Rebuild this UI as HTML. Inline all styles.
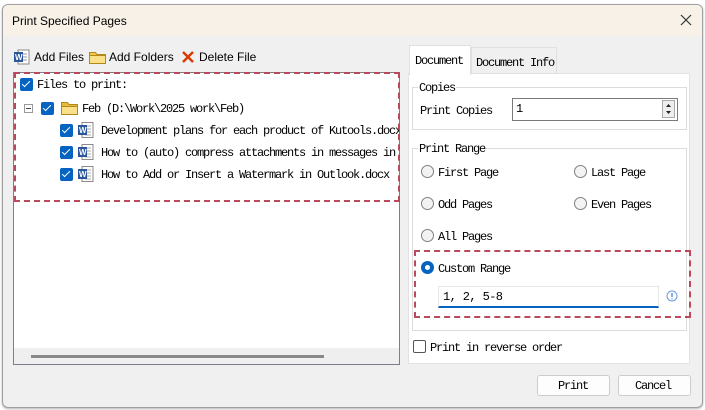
<!DOCTYPE html>
<html><head><meta charset="utf-8"><style>
*{box-sizing:border-box;margin:0;padding:0}
body{width:705px;height:410px;background:#fff;position:relative;overflow:hidden;font-family:"Liberation Sans",sans-serif;font-size:12px;color:#000}
.win{position:absolute;left:2px;top:4px;width:701px;height:404px;border:1px solid #a0a0a0;border-radius:6px;background:#f0f0f0;overflow:hidden;box-shadow:0 1px 2px rgba(0,0,0,.3)}
.title{position:absolute;left:0;top:0;width:100%;height:31px;background:#f8f1e8}
.a{position:absolute;white-space:nowrap}
.m{font-family:"Liberation Mono","Noto Sans CJK SC",monospace;font-size:12px;letter-spacing:-1.2px;line-height:14px;margin-top:1px}
.cb{position:absolute;width:13px;height:13px;background:#0563c1;border-radius:2px}
.cb:after{content:"";position:absolute;left:4px;top:1px;width:3px;height:7px;border:solid #fff;border-width:0 1.5px 1.5px 0;transform:rotate(45deg)}
.rad{position:absolute;width:13px;height:13px;border:1px solid #808080;border-radius:50%;background:#f3f3f3}
.dash{position:absolute;border:2px dashed #b84a5c}
</style></head><body>
<div class="win">
<div class="title"></div>
<div class="a" style="left:9px;top:9px;font-size:12px">Print Specified Pages</div>
<svg class="a" style="left:677px;top:9px" width="12" height="12"><path d="M1 1L11 11M11 1L1 11" stroke="#333" stroke-width="1.2"/></svg>
</div>
<svg class="a" style="left:14px;top:49px" width="16" height="16"><rect x="4" y="1" width="11" height="14" fill="#fff" stroke="#8a8a8a"/><path d="M7 5h6M7 8h6M7 11h6" stroke="#999"/><rect x="0" y="3" width="9" height="10" fill="#2b579a"/><text x="1" y="11" font-size="8" fill="#fff" font-family="Liberation Sans" font-weight="bold">W</text></svg>
<div class="a" style="left:34px;top:50px">Add Files</div>
<svg class="a" style="left:89px;top:50px" width="17" height="14"><path d="M0.5 2.5h6l1.5 2h8.5v9h-16z" fill="#f2c94c" stroke="#b38a1a"/><path d="M0.5 5.5h16v8h-16z" fill="#fbe08a" stroke="#b38a1a"/></svg>
<div class="a" style="left:109px;top:50px">Add Folders</div>
<svg class="a" style="left:181px;top:50px" width="14" height="14"><path d="M2 2L12 12M12 2L2 12" stroke="#d83b01" stroke-width="2.4"/></svg>
<div class="a" style="left:199px;top:50px">Delete File</div>
<div class="a" style="left:13px;top:72px;width:387px;height:293px;background:#fff;border:1px solid #7a7f8a"></div>
<div class="a" style="left:14px;top:348px;width:385px;height:16px;background:#efefef"></div>
<div class="a" style="left:31px;top:355px;width:293px;height:3px;background:#888"></div>
<div class="dash" style="left:14px;top:72px;width:386px;height:130px"></div>
<div class="cb" style="left:20px;top:78px"></div>
<div class="a m" style="left:37px;top:77px">Files to print:</div>
<div class="a" style="left:24px;top:104px;width:9px;height:9px;border:1px solid #999;background:#fff"></div>
<div class="a" style="left:26px;top:108px;width:5px;height:1px;background:#444"></div>
<div class="cb" style="left:41px;top:102px"></div>
<svg class="a" style="left:61px;top:101px" width="17" height="14"><path d="M0.5 1.5h6l1.5 2h8.5v10h-16z" fill="#e8b93a" stroke="#b38a1a"/><path d="M0.5 5.5h16v8h-16z" fill="#fbe08a" stroke="#b38a1a"/></svg>
<div class="a m" style="left:82px;top:101px">Feb (D:\Work\2025 work\Feb)</div>
<div class="a" style="left:14px;top:118px;width:385px;height:70px;overflow:hidden">
<div class="cb" style="left:46px;top:6px"></div><div class="cb" style="left:46px;top:28px"></div><div class="cb" style="left:46px;top:50px"></div>
<svg class="a" style="left:64px;top:4px" width="16" height="16"><rect x="4" y="0.5" width="11" height="15" fill="#fff" stroke="#8a8a8a"/><path d="M7 4h6M7 7h6M7 10h6M7 13h6" stroke="#aaa"/><rect x="0" y="3" width="9" height="10" fill="#2b579a"/><text x="1" y="11" font-size="8" fill="#fff" font-family="Liberation Sans" font-weight="bold">W</text></svg>
<svg class="a" style="left:64px;top:26px" width="16" height="16"><rect x="4" y="0.5" width="11" height="15" fill="#fff" stroke="#8a8a8a"/><path d="M7 4h6M7 7h6M7 10h6M7 13h6" stroke="#aaa"/><rect x="0" y="3" width="9" height="10" fill="#2b579a"/><text x="1" y="11" font-size="8" fill="#fff" font-family="Liberation Sans" font-weight="bold">W</text></svg>
<svg class="a" style="left:64px;top:48px" width="16" height="16"><rect x="4" y="0.5" width="11" height="15" fill="#fff" stroke="#8a8a8a"/><path d="M7 4h6M7 7h6M7 10h6M7 13h6" stroke="#aaa"/><rect x="0" y="3" width="9" height="10" fill="#2b579a"/><text x="1" y="11" font-size="8" fill="#fff" font-family="Liberation Sans" font-weight="bold">W</text></svg>
<div class="a m" style="left:87px;top:5px">Development plans for each product of Kutools.docx</div>
<div class="a m" style="left:87px;top:27px">How to (auto) compress attachments in messages in Outlook.docx</div>
<div class="a m" style="left:87px;top:49px">How to Add or Insert a Watermark in Outlook.docx</div>
</div>
<div class="a" style="left:408px;top:73px;width:282px;height:291px;background:#fff;border:1px solid #e3e3e3"></div>
<div class="a" style="left:471px;top:47px;width:86px;height:27px;background:#f0f0f0;border:1px solid #e0e0e0"></div>
<div class="a" style="left:409px;top:45px;width:62px;height:30px;background:#fff;border:1px solid #e0e0e0;border-bottom:none"></div>
<div class="a m" style="left:415px;top:53px">Document</div>
<div class="a m" style="left:476px;top:55px">Document Info</div>
<div class="a" style="left:412px;top:87px;width:275px;height:43px;border:1px solid #dcdcdc"></div>
<div class="a m" style="left:418px;top:80px;background:#fff;padding:0 1px">Copies</div>
<div class="a m" style="left:420px;top:103px">Print Copies</div>
<div class="a" style="left:512px;top:98px;width:166px;height:23px;border:1px solid #7a7a7a;background:#fff"></div>
<div class="a m" style="left:516px;top:101px">1</div>
<div class="a" style="left:662px;top:100px;width:13px;height:18px;border:1px solid #aaa;background:#eee"></div>
<svg class="a" style="left:663px;top:101px" width="11" height="16"><path d="M3 6L5.5 3L8 6z M3 10L5.5 13L8 10z" fill="#222"/></svg>
<div class="a" style="left:412px;top:148px;width:275px;height:183px;border:1px solid #dcdcdc"></div>
<div class="a m" style="left:418px;top:141px;background:#fff;padding:0 1px">Print Range</div>
<div class="rad" style="left:421px;top:165px"></div><div class="a m" style="left:438px;top:165px">First Page</div>
<div class="rad" style="left:574px;top:165px"></div><div class="a m" style="left:591px;top:165px">Last Page</div>
<div class="rad" style="left:421px;top:197px"></div><div class="a m" style="left:438px;top:197px">Odd Pages</div>
<div class="rad" style="left:574px;top:197px"></div><div class="a m" style="left:591px;top:197px">Even Pages</div>
<div class="rad" style="left:421px;top:229px"></div><div class="a m" style="left:438px;top:229px">All Pages</div>
<div class="a" style="left:421px;top:261px;width:13px;height:13px;border-radius:50%;background:#0563c1"></div>
<div class="a" style="left:425px;top:265px;width:5px;height:5px;border-radius:50%;background:#fff"></div>
<div class="a m" style="left:438px;top:261px">Custom Range</div>
<div class="a" style="left:438px;top:286px;width:221px;height:22px;background:#fff;border:1px solid #e6e6e6;border-bottom:2px solid #0563c1"></div>
<div class="a m" style="left:443px;top:289px;letter-spacing:-0.6px">1, 2, 5-8</div>
<svg class="a" style="left:666px;top:290px" width="12" height="12"><circle cx="6" cy="6" r="5" fill="none" stroke="#6a9ae0"/><path d="M6 3v4M6 8.5v1" stroke="#3a78d8" stroke-width="1.2"/></svg>
<div class="dash" style="left:414px;top:250px;width:277px;height:68px"></div>
<div class="a" style="left:413px;top:340px;width:13px;height:13px;border:1px solid #555;border-radius:2px;background:#fff"></div>
<div class="a m" style="left:430px;top:340px">Print in reverse order</div>
<div class="a" style="left:537px;top:375px;width:73px;height:21px;border:1px solid #ccc;border-radius:3px;background:#fdfdfd"></div>
<div class="a m" style="left:558px;top:378px">Print</div>
<div class="a" style="left:618px;top:375px;width:73px;height:21px;border:1px solid #ccc;border-radius:3px;background:#fdfdfd"></div>
<div class="a m" style="left:635px;top:378px">Cancel</div>
</body></html>
